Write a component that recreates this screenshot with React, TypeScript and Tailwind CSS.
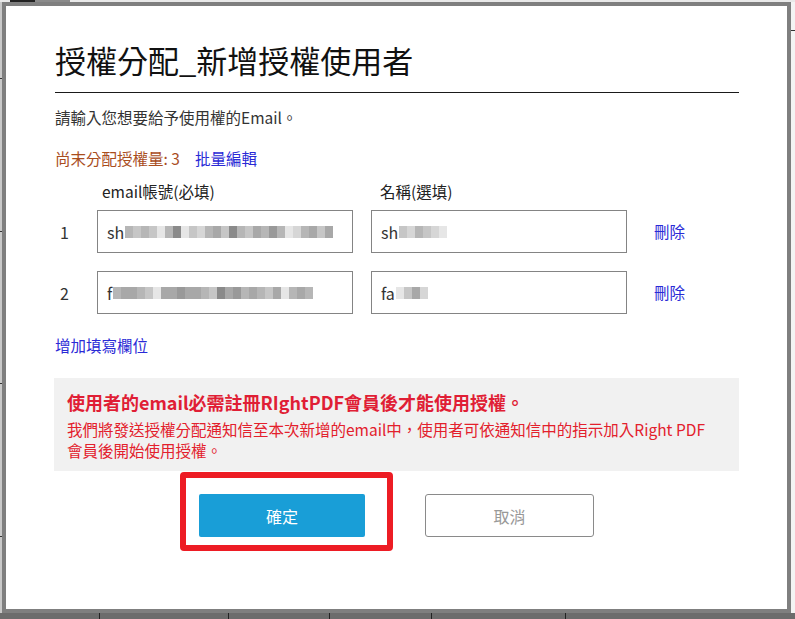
import React from 'react';

const font = "font-['Microsoft_JhengHei','Noto_Sans_CJK_TC',sans-serif]";

const shades = [
    'bg-[#d6d6d6]',
    'bg-[#c6c6c6]',
    'bg-[#b6b6b6]',
    'bg-[#a8a8a8]',
    'bg-[#999999]',
    'bg-[#e6e6e6]',
    'bg-[#8a8a8a]',
];

const rows = [
    {
        no: 1,
        email: { lead: 'sh', blur: [2, 1, 2, 1, 5, 2, 6, 5, 1, 0, 2, 3, 1, 6, 2, 1, 3, 2, 4, 2, 5, 0, 2, 3, 1, 3] },
        name: { lead: 'sh', blur: [1, 0, 2, 1, 0, 5] },
    },
    {
        no: 2,
        email: { lead: 'f', blur: [2, 3, 3, 2, 1, 5, 3, 3, 4, 3, 3, 2, 1, 6, 3, 4, 2, 3, 2, 1, 3, 5, 2, 3, 2] },
        name: { lead: 'fa', blur: [5, 1, 3, 0] },
    },
];

// pixelated part of the masked input text
function Blur({ blocks }: { blocks: number[] }) {
    return (
        <span className="flex items-center ml-[1px]">
            {blocks.map((b, i) => (
                <span key={i} className={'block w-[8px] h-[12px] ' + shades[b]} />
            ))}
        </span>
    );
}

function Field({ lead, blur }: { lead: string; blur: number[] }) {
    return (
        <div className="w-[256px] h-[43px] border border-[#848484] bg-white flex items-center pl-[9px] text-[16px] text-[#333]">
            <span>{lead}</span>
            <Blur blocks={blur} />
        </div>
    );
}

export default function App() {
    return (
        <div className={'w-[795px] h-[619px] flex flex-col bg-[#e9e9e9] overflow-hidden ' + font}>
            {/* strip above the dialog */}
            <div className="h-[2px] flex shrink-0">
                <div className="w-[10px]" />
                <div className="w-[25px] bg-[#222]" />
                <div className="w-[35px] bg-[#8a8a8a]" />
            </div>

            <div className="flex h-[611px] shrink-0">
                <div className="w-[2px] bg-[#c9c9c9] flex flex-col justify-around">
                    <div className="h-[1px] bg-[#333]" />
                    <div className="h-[1px] bg-[#333]" />
                    <div className="h-[1px] bg-[#333]" />
                    <div className="h-[1px] bg-[#333]" />
                </div>

                {/* dialog */}
                <div className="relative w-[789px] border-[4px] border-[#7f7f7f] bg-white pt-[34px] pl-[49px]">
                    <div className="w-[684px] flex flex-col">
                        <h1 className="text-[31px] leading-[40px] text-[#111] font-normal">授權分配_新增授權使用者</h1>
                        <div className="mt-[12px] border-t-[1.5px] border-[#1a1a1a]" />

                        <p className="mt-[14px] text-[15.5px] leading-[20px] text-[#333]">請輸入您想要給予使用權的Email。</p>

                        <div className="mt-[21px] flex text-[15.5px] leading-[20px]">
                            <span className="text-[#a94d1d]">尚末分配授權量: 3</span>
                            <a className="ml-[15px] text-[#2a2ad6] cursor-pointer">批量編輯</a>
                        </div>

                        <div className="mt-[13px] flex text-[15.5px] leading-[20px] text-[#222]">
                            <span className="ml-[47px] w-[278px]">email帳號(必填)</span>
                            <span>名稱(選填)</span>
                        </div>

                        <div className="mt-[9px] flex flex-col gap-[18px]">
                            {rows.map((r) => (
                                <div key={r.no} className="flex items-center">
                                    <span className="w-[42px] pl-[5px] text-[16px] text-[#333]">{r.no}</span>
                                    <Field lead={r.email.lead} blur={r.email.blur} />
                                    <div className="w-[18px]" />
                                    <Field lead={r.name.lead} blur={r.name.blur} />
                                    <a className="ml-[27px] text-[15.5px] text-[#2a2ad6] cursor-pointer">刪除</a>
                                </div>
                            ))}
                        </div>

                        <a className="mt-[21px] text-[15.5px] leading-[20px] text-[#2a2ad6] cursor-pointer">增加填寫欄位</a>

                        <div className="mt-[23px] -ml-[1px] w-[685px] h-[93px] bg-[#f1f1f1] pl-[13px] pt-[11px]">
                            <p className="text-[18px] leading-[26px] font-semibold text-[#e01e35]">
                                使用者的email必需註冊RIghtPDF會員後才能使用授權。
                            </p>
                            <p className="mt-[4px] text-[15.5px] leading-[21px] text-[#e3202c] whitespace-nowrap">
                                我們將發送授權分配通知信至本次新增的email中，使用者可依通知信中的指示加入Right PDF
                                <br />
                                會員後開始使用授權。
                            </p>
                        </div>

                        <div className="mt-[23px] flex">
                            <button className="ml-[144px] w-[166px] h-[43px] rounded-[2px] bg-[#199ed7] text-white text-[16px]">確定</button>
                            <button className="ml-[60px] w-[169px] h-[43px] rounded-[3px] border border-[#8a8a8a] bg-white text-[#999] text-[16px]">取消</button>
                        </div>
                    </div>

                    {/* red annotation around the confirm button */}
                    <div className="absolute left-[174px] top-[466px] w-[213px] h-[79px] border-[6px] border-[#ed1c24] rounded-[4px]" />
                </div>

                <div className="flex-1 bg-[#f4f4f4] relative">
                    <div className="absolute top-[28px] left-0 right-0 h-[1px] bg-[#333]" />
                </div>
            </div>

            {/* sheet behind the dialog */}
            <div className="flex-1 bg-[#6c6c6c] flex">
                <div className="w-[100px] border-r border-[#222]" />
                <div className="w-[129px] border-r border-[#222]" />
                <div className="w-[101px] border-r border-[#222]" />
                <div className="w-[102px] border-r border-[#222]" />
                <div className="w-[134px] border-r border-[#222]" />
            </div>
        </div>
    );
}
